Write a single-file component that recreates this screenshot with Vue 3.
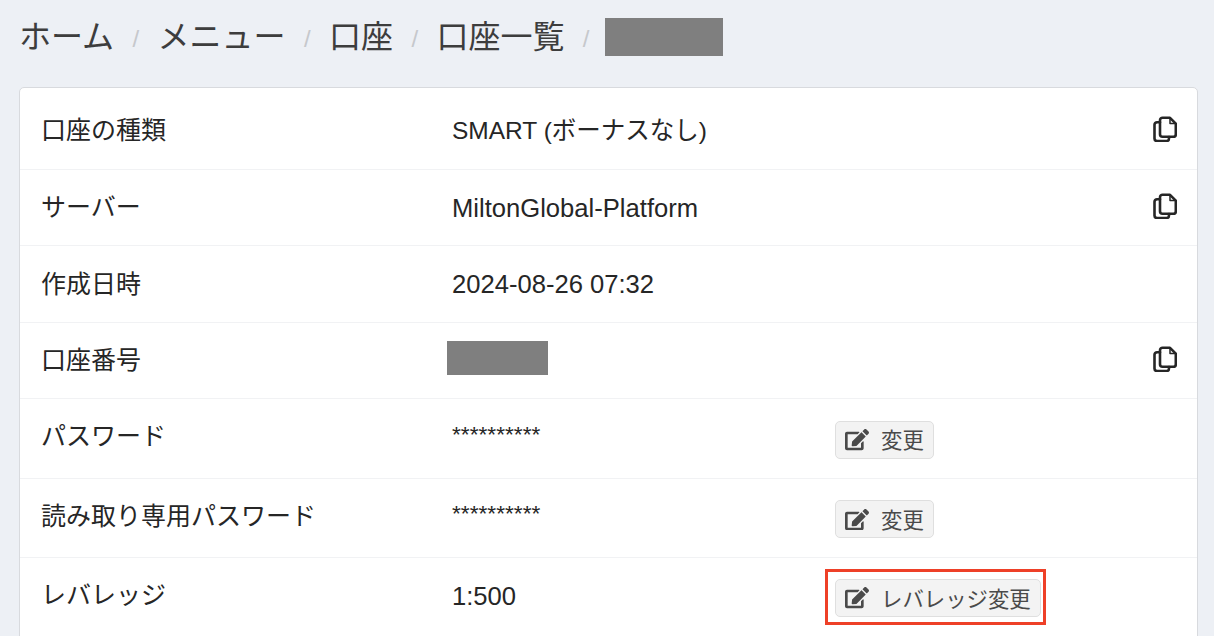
<template>
  <div class="page">
    <nav class="breadcrumb">
      <template v-for="item in crumbs" :key="item">
        <span class="crumb">{{ item }}</span>
        <span class="sep">/</span>
      </template>
      <span class="redacted crumb-mask"></span>
    </nav>

    <div class="card">
      <div class="row" v-for="row in rows" :key="row.label" :class="row.type">
        <div class="label">{{ row.label }}</div>
        <div class="value">
          <span v-if="row.masked" class="redacted value-mask"></span>
          <template v-else>{{ row.value }}</template>
        </div>
        <div class="action">
          <span v-if="row.button" :class="{ highlight: row.highlight }">
            <button class="btn" type="button">
              <svg class="edit-icon" viewBox="0 0 576 512">
                <path fill="currentColor" d="M402.6 83.2l90.2 90.2c3.8 3.8 3.8 10 0 13.8L274.4 405.6l-92.8 10.3c-12.4 1.4-22.9-9.1-21.5-21.5l10.3-92.8L388.8 83.2c3.8-3.8 10-3.8 13.8 0zm162-22.9l-48.8-48.8c-15.2-15.2-39.9-15.2-55.2 0l-35.4 35.4c-3.8 3.8-3.8 10 0 13.8l90.2 90.2c3.8 3.8 10 3.8 13.8 0l35.4-35.4c15.2-15.3 15.2-40 0-55.2zM384 346.2V448H64V128h229.8c3.2 0 6.2-1.3 8.5-3.5l40-40c7.6-7.6 2.2-20.5-8.5-20.5H48C21.5 64 0 85.5 0 112v352c0 26.5 21.5 48 48 48h352c26.5 0 48-21.5 48-48V306.2c0-10.7-12.9-16-20.5-8.5l-40 40c-2.2 2.3-3.5 5.3-3.5 8.5z"/>
              </svg>
              <span class="btn-text">{{ row.button }}</span>
            </button>
          </span>
          <svg v-if="row.copy" class="copy-icon" viewBox="0 0 24 26" fill="none" stroke="currentColor" stroke-width="2.6" stroke-linejoin="round" stroke-linecap="round">
            <path d="M9.500 1.800h7.500l5.800 5.800v10.700a2.500 2.500 0 0 1-2.500 2.500H9.500a2.500 2.500 0 0 1-2.500-2.500V4.300a2.500 2.500 0 0 1 2.500-2.500z"/>
            <path d="M17 2.500v5h5" stroke-width="1.500"/>
            <path d="M7 6.300H4a2.500 2.500 0 0 0-2.500 2.500V22.600A2.500 2.500 0 0 0 4 25h9.500a2.500 2.500 0 0 0 2.500-2.500v-1.500"/>
          </svg>
        </div>
      </div>
    </div>
  </div>
</template>

<script setup>
const crumbs = ['ホーム', 'メニュー', '口座', '口座一覧']

const rows = [
  { label: '口座の種類', value: 'SMART (ボーナスなし)', copy: true, type: 'first' },
  { label: 'サーバー', value: 'MiltonGlobal-Platform', copy: true },
  { label: '作成日時', value: '2024-08-26 07:32' },
  { label: '口座番号', masked: true, copy: true },
  { label: 'パスワード', value: '**********', button: '変更', type: 'with-btn' },
  { label: '読み取り専用パスワード', value: '**********', button: '変更', type: 'with-btn' },
  { label: 'レバレッジ', value: '1:500', button: 'レバレッジ変更', highlight: true, type: 'last' }
]
</script>

<style scoped>
.page {
  height: 636px;
  overflow: hidden;
  box-sizing: border-box;
  padding: 18px 16px 0 19px;
  background: #edf0f5;
  font-family: "Liberation Sans", "Noto Sans CJK JP", sans-serif;
  color: #262626;
}

.breadcrumb {
  display: flex;
  align-items: center;
  height: 38px;
  margin-bottom: 31px;
  font-size: 32px;
  color: #3d3d3d;
}

.crumb {
  margin-bottom: 6px;
}

.sep {
  margin: 4px 18.400px 0;
  font-size: 24px;
  color: #c6c8cc;
}

.redacted {
  display: block;
  background: #7f7f7f;
}

.crumb-mask {
  width: 118px;
  height: 38px;
  margin-left: -2.500px;
}

.card {
  height: 600px;
  box-sizing: border-box;
  border: 1px solid #d8dade;
  border-radius: 5px;
  background: #fff;
}

.row {
  display: grid;
  grid-template-columns: 411px 383px 1fr;
  align-items: center;
  height: 76.500px;
  box-sizing: border-box;
  padding: 0 20px 0 21px;
  border-bottom: 1px solid #f1f2f4;
  font-size: 25.600px;
}

.row.first {
  height: 81.600px;
  padding-top: 4px;
}

.row.with-btn {
  height: 79.500px;
}

.row.last {
  height: 76px;
  border-bottom: 0;
}

.label {
  margin-bottom: 4px;
  font-size: 25px;
}

.with-btn .label {
  margin-bottom: 8px;
}

.value {
  margin-top: 2px;
}

.first .value {
  margin: 0 0 4px;
  font-size: 24.500px;
}

.with-btn .value {
  margin: 0 0 8px;
  font-size: 22.700px;
}

.last .label {
  margin-bottom: 6px;
}

.last .value {
  margin-top: 0;
}

.value-mask {
  width: 101px;
  height: 34px;
  margin: 0 0 6px -5px;
}

.action {
  display: flex;
  align-items: center;
  justify-content: space-between;
}

.with-btn .action {
  margin-top: 3px;
}

.last .action {
  margin-top: 2px;
}

.copy-icon {
  width: 24px;
  height: 26px;
  margin: 0 0 2px auto;
  color: #262626;
}

.btn {
  display: inline-flex;
  align-items: center;
  height: 38px;
  padding: 0 9px;
  border: 1px solid #dfdfdf;
  border-radius: 5px;
  background: #f3f3f3;
  font-family: inherit;
  font-size: 21.400px;
  color: #4a4a4a;
}

.btn-text {
  margin-bottom: 2px;
}

.edit-icon {
  width: 24px;
  height: 21.330px;
  margin-right: 12px;
  color: #4a4a4a;
}

.highlight {
  display: inline-flex;
  margin: 0 0 0 -10px;
  padding: 7px 2px 5px 7px;
  border: 3px solid #ee4028;
}
</style>
